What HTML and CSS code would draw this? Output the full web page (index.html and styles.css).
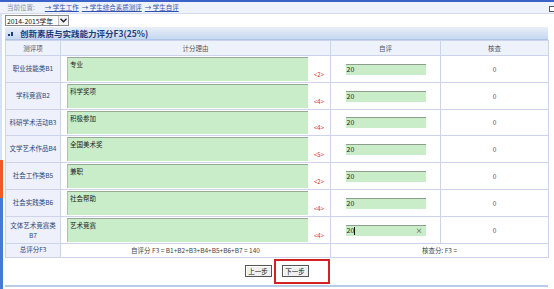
FILE: index.html
```html
<!DOCTYPE html>
<html>
<head>
<meta charset="utf-8">
<link rel="stylesheet" href="styles.css">
</head>
<body>
<div class="topline"></div>
<div class="crumbs">
  <span class="here">当前位置:</span>
  <a>→ 学生工作</a>
  <a>→ 学生综合素质测评</a>
  <a>→ 学生自评</a>
  <span class="winicon"></span>
</div>
<div class="page">
  <div class="selrow">
    <div class="select"><span>2014-2015学年</span><span class="arrow"><svg width="7" height="5" viewBox="0 0 7 5"><path d="M0.5 0.8 L3.5 3.8 L6.5 0.8" fill="none" stroke="#223" stroke-width="1.4"/></svg></span></div>
  </div>
  <div class="titlebar"><span class="dots"><i></i><i></i></span>创新素质与实践能力评分F3(25%)</div>
  <table class="grid">
    <colgroup><col class="c1"><col class="c2"><col class="c3"><col class="c4"></colgroup>
    <thead>
      <tr><th>测评项</th><th>计分理由</th><th>自评</th><th>核查</th></tr>
    </thead>
    <tbody>
      <tr><td class="item">职业技能类B1</td><td><div class="reason"><div class="ta">专业</div><span class="max">&lt;2&gt;</span></div></td><td class="self"><span class="inp">20</span></td><td class="chk">0</td></tr>
      <tr><td class="item">学科竞赛B2</td><td><div class="reason"><div class="ta">科学奖项</div><span class="max">&lt;4&gt;</span></div></td><td class="self"><span class="inp">20</span></td><td class="chk">0</td></tr>
      <tr><td class="item">科研学术活动B3</td><td><div class="reason"><div class="ta">积极参加</div><span class="max">&lt;4&gt;</span></div></td><td class="self"><span class="inp">20</span></td><td class="chk">0</td></tr>
      <tr><td class="item">文学艺术作品B4</td><td><div class="reason"><div class="ta">全国美术奖</div><span class="max">&lt;5&gt;</span></div></td><td class="self"><span class="inp">20</span></td><td class="chk">0</td></tr>
      <tr><td class="item">社会工作类B5</td><td><div class="reason"><div class="ta">兼职</div><span class="max">&lt;2&gt;</span></div></td><td class="self"><span class="inp">20</span></td><td class="chk">0</td></tr>
      <tr><td class="item">社会实践类B6</td><td><div class="reason"><div class="ta">社会帮助</div><span class="max">&lt;4&gt;</span></div></td><td class="self"><span class="inp">20</span></td><td class="chk">0</td></tr>
      <tr><td class="item"><span class="two">文体艺术竞赛类</span><span class="two">B7</span></td><td><div class="reason"><div class="ta">艺术竞赛</div><span class="max">&lt;4&gt;</span></div></td><td class="self"><span class="inp active">20<span class="caret"></span><span class="clear">×</span></span></td><td class="chk">0</td></tr>
      <tr class="total"><td class="item">总评分F3</td><td>自评分 F3 = B1+B2+B3+B4+B5+B6+B7 = 140</td><td colspan="2">核查分: F3 =</td></tr>
    </tbody>
  </table>
  <div class="actions">
    <button class="btn">上一步</button>
    <button class="btn">下一步</button>
    <span class="mark"></span>
  </div>
  <div class="bottomline"></div>
</div>
<span class="edge-top"></span>
<span class="edge-tab"></span>
<span class="edge-bottom"></span>
</body>
</html>
```

FILE: styles.css
```css
html, body {
  margin: 0;
  padding: 0;
  background: #ffffff;
}
body {
  position: relative;
  width: 554px;
  height: 289px;
  overflow: hidden;
  font-family: "Noto Sans CJK SC", "Noto Sans", sans-serif;
  font-size: 6.5px;
  color: #333;
}
.topline {
  height: 2px;
  background: #3a62c8;
}
.crumbs {
  position: relative;
  height: 11px;
  background: #eef2fa;
  border-bottom: 1px solid #d4dcee;
  display: flex;
  align-items: center;
  padding-left: 7px;
  gap: 3px;
  line-height: 1;
}
.crumbs .here {
  color: #8890a8;
  margin-right: 7px;
}
.crumbs a {
  color: #3050b0;
  text-decoration: underline;
}
.winicon {
  position: absolute;
  right: 0;
  top: 4px;
  width: 4px;
  height: 4px;
  border: 1px solid #556;
  border-right: none;
  background: #fff;
}
.page {
  padding: 0 6px 0 5px;
}
.selrow {
  height: 13px;
  display: flex;
  align-items: center;
}
.select {
  width: 64px;
  height: 11px;
  border: 1px solid #8a8a8a;
  display: flex;
  align-items: center;
  justify-content: space-between;
  box-sizing: border-box;
  font-size: 6.8px;
  color: #111;
  padding-left: 1px;
  background: #fff;
}
.select .arrow {
  width: 9px;
  height: 9px;
  border-left: 1px solid #bbb;
  display: flex;
  align-items: center;
  justify-content: center;
  background: #f4f4f4;
}
.titlebar {
  height: 13px;
  background: linear-gradient(#e8eef9, #c6d8f0);
  border-bottom: 1px solid #b0c4e4;
  box-sizing: border-box;
  display: flex;
  align-items: center;
  padding-left: 3px;
  font-size: 8.5px;
  font-weight: bold;
  color: #1c3c7c;
}
.dots {
  display: inline-flex;
  align-items: flex-end;
  gap: 1px;
  width: 8px;
  height: 6px;
  margin-right: 4px;
}
.dots i {
  display: block;
  width: 2px;
  height: 2px;
  background: #1c3c7c;
}
.dots i:last-child {
  height: 4px;
}
.grid {
  width: 543px;
  table-layout: fixed;
  border-collapse: collapse;
}
.grid col.c1 { width: 55px; }
.grid col.c2 { width: 270px; }
.grid col.c3 { width: 110px; }
.grid col.c4 { width: 108px; }
.grid th, .grid td {
  border: 1px solid #ccd3ea;
  padding: 0;
  text-align: center;
  font-weight: normal;
}
.grid th {
  height: 14px;
  background: #eef2fb;
  color: #555;
}
.grid tbody tr {
  height: 26.8px;
}
.grid td.item {
  background: #eef0fb;
  color: #2d4678;
  line-height: 1.2;
}
.two {
  display: block;
  line-height: 10px;
}
.reason {
  display: flex;
  height: 25.8px;
  padding-left: 6px;
}
.ta {
  flex: 1;
  margin: 1px 0;
  background: #c9ecc9;
  border-top: 1px solid #9aa89a;
  border-left: 1px solid #b0c0b0;
  text-align: left;
  color: #222;
  padding: 1px 2px;
  box-sizing: border-box;
}
.max {
  width: 22px;
  align-self: flex-end;
  margin-bottom: 3px;
  color: #e02828;
  font-size: 6px;
}
.self .inp {
  position: relative;
  display: inline-block;
  width: 80px;
  height: 11px;
  box-sizing: border-box;
  background: #c9ecc9;
  border-top: 1px solid #8e9e8e;
  text-align: left;
  color: #222;
  font-size: 7px;
  line-height: 9px;
  padding-left: 1px;
  vertical-align: middle;
}
.inp .caret {
  display: inline-block;
  width: 1px;
  height: 8px;
  background: #111;
  vertical-align: middle;
}
.inp .clear {
  position: absolute;
  right: 3px;
  top: 0;
  font-size: 7px;
  color: #333;
}
.chk {
  color: #555;
}
.grid tbody tr.total {
  height: 14px;
}
.total td {
  color: #444;
}
.actions {
  position: relative;
  height: 27px;
  display: flex;
  justify-content: center;
  align-items: center;
  gap: 10px;
}
.btn {
  width: 27px;
  height: 12px;
  padding: 0;
  font-family: inherit;
  font-size: 6.5px;
  color: #111;
  background: #f0f0f0;
  border: 1px solid #555;
  box-shadow: inset 1px 1px 0 #fff;
  line-height: 1;
}
.mark {
  position: absolute;
  left: 269px;
  top: 1px;
  width: 56px;
  height: 25px;
  border: 2px solid #d42020;
  box-sizing: border-box;
}
.bottomline {
  height: 2px;
  background: #b8cce8;
}
.edge-top {
  position: absolute;
  left: 0;
  top: 14px;
  width: 2px;
  height: 146px;
  background: #d6e2f4;
}
.edge-tab {
  position: absolute;
  left: 0;
  top: 160px;
  width: 3px;
  height: 38px;
  background: #f05a28;
}
.edge-bottom {
  position: absolute;
  left: 0;
  top: 198px;
  width: 3px;
  height: 91px;
  background: #4a78d8;
}
```
